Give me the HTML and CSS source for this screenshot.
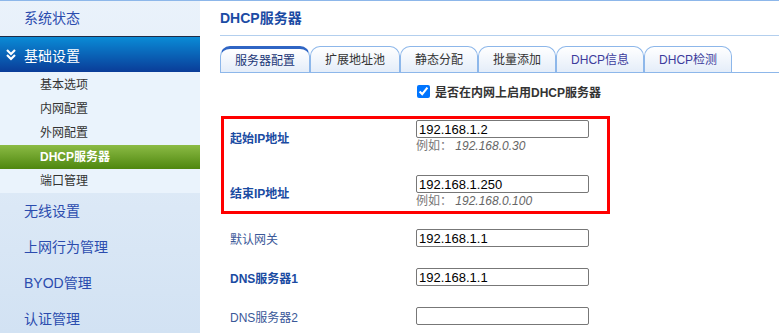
FILE: index.html
```html
<!DOCTYPE html>
<html lang="zh-CN">
<head>
    <meta charset="UTF-8">
    <title>DHCP服务器</title>
    <link rel="stylesheet" href="styles.css">
</head>
<body>
    <div class="page">
        <div class="sidebar">
            <div class="nav-item">系统状态</div>
            <div class="nav-group">
                <svg class="chevron" width="10" height="12" viewBox="0 0 10 12">
                    <path d="M1 1 L5 5 L9 1" fill="none" stroke="#fff" stroke-width="2.2"/>
                    <path d="M1 6 L5 10 L9 6" fill="none" stroke="#fff" stroke-width="2.2"/>
                </svg>
                基础设置
            </div>
            <div class="submenu">
                <div class="sub-item">基本选项</div>
                <div class="sub-item">内网配置</div>
                <div class="sub-item">外网配置</div>
                <div class="sub-item active">DHCP服务器</div>
                <div class="sub-item">端口管理</div>
            </div>
            <div class="nav-item">无线设置</div>
            <div class="nav-item">上网行为管理</div>
            <div class="nav-item">BYOD管理</div>
            <div class="nav-item">认证管理</div>
        </div>

        <div class="main">
            <div class="title">DHCP服务器</div>
            <div class="tabs">
                <div class="tab active">服务器配置</div>
                <div class="tab">扩展地址池</div>
                <div class="tab">静态分配</div>
                <div class="tab">批量添加</div>
                <div class="tab latin">DHCP信息</div>
                <div class="tab latin">DHCP检测</div>
            </div>

            <div class="check-row">
                <input type="checkbox" checked>
                <span>是否在内网上启用DHCP服务器</span>
            </div>

            <div class="highlight">
                <div class="row">
                    <label class="strong">起始IP地址</label>
                    <div class="field">
                        <input type="text" value="192.168.1.2">
                        <div class="hint">例如： <em>192.168.0.30</em></div>
                    </div>
                </div>
                <div class="row second">
                    <label class="strong">结束IP地址</label>
                    <div class="field">
                        <input type="text" value="192.168.1.250">
                        <div class="hint">例如： <em>192.168.0.100</em></div>
                    </div>
                </div>
            </div>

            <div class="row plain first">
                <label>默认网关</label>
                <div class="field"><input type="text" value="192.168.1.1"></div>
            </div>
            <div class="row plain">
                <label class="strong">DNS服务器1</label>
                <div class="field"><input type="text" value="192.168.1.1"></div>
            </div>
            <div class="row plain">
                <label>DNS服务器2</label>
                <div class="field"><input type="text" value=""></div>
            </div>
        </div>
    </div>
</body>
</html>
```

FILE: styles.css
```css
body {
    margin: 0;
    font-family: "Liberation Sans", "Noto Sans CJK SC", sans-serif;
    font-size: 12px;
    background: #fff;
    overflow: hidden;
}
.page {
    display: flex;
    border-top: 1px solid #8db7ea;
    height: 332px;
}
.sidebar {
    width: 200px;
    flex-shrink: 0;
    background: linear-gradient(#eaf2fb, #d2e2f3);
}
.nav-item {
    height: 36px;
    line-height: 36px;
    padding-left: 24px;
    font-size: 14px;
    color: #2b4cae;
}
.nav-item:first-child {
    height: 35px;
    line-height: 35px;
    border-bottom: 1px solid #1d2b48;
}
.nav-group {
    height: 35px;
    display: flex;
    align-items: center;
    padding-left: 6px;
    font-size: 14px;
    color: #fff;
    background: linear-gradient(#0a8bd6, #0a3c98);
}
.chevron {
    margin-right: 8px;
}
.submenu {
    background: #eaf3fc;
    padding-top: 1px;
}
.sub-item {
    height: 24px;
    line-height: 24px;
    padding-left: 40px;
    font-size: 12px;
    color: #333;
}
.sub-item.active {
    color: #fff;
    font-weight: bold;
    background: linear-gradient(#8cbb45, #4e870f);
}
.main {
    flex: 1;
    padding-left: 20px;
}
.title {
    height: 34px;
    line-height: 34px;
    font-size: 14px;
    font-weight: bold;
    color: #1b4ba4;
    border-bottom: 1px solid #b3cfee;
}
.tabs {
    display: flex;
    margin-top: 10px;
    border-bottom: 1px solid #8db7ea;
    height: 26px;
}
.tab {
    height: 25px;
    line-height: 27px;
    padding: 0 14px;
    border: 1px solid #8db7ea;
    border-bottom: none;
    border-radius: 10px 10px 0 0;
    background: linear-gradient(#fff, #e4edf9);
    color: #333;
    font-size: 12px;
}
.tab.latin {
    color: #3d3c9c;
}
.tab.active {
    color: #1b3677;
    border-top: 3px solid #2f65c4;
    height: 23px;
    line-height: 25px;
}
.check-row {
    display: flex;
    align-items: center;
    height: 36px;
    padding-left: 195px;
    font-weight: bold;
    color: #333;
}
.check-row input {
    margin: 0 5px 0 2px;
    width: 13px;
    height: 13px;
}
.highlight {
    width: 383px;
    border: 3px solid #f00;
    padding: 1px 0 2px;
    margin: 7px 0 0 1px;
}
.row {
    display: flex;
    align-items: center;
}
.row label {
    width: 186px;
    padding-left: 6px;
    color: #3a5898;
}
.row label.strong {
    font-weight: bold;
    color: #1a4ba2;
}
.row.second {
    margin-top: 21px;
}
.row.plain {
    margin-top: 21px;
    padding-left: 4px;
}
.row.plain.first {
    margin-top: 15px;
}
.field input {
    display: block;
    width: 173px;
    height: 18px;
    box-sizing: border-box;
    border: 1px solid #777;
    border-radius: 2px;
    padding: 0 2px;
    margin: 0;
    font-family: "Liberation Sans", sans-serif;
    font-size: 13px;
    color: #000;
}
.hint {
    height: 16px;
    line-height: 16px;
    color: #777;
    font-size: 12px;
}
.hint em {
    color: #666;
}
```
